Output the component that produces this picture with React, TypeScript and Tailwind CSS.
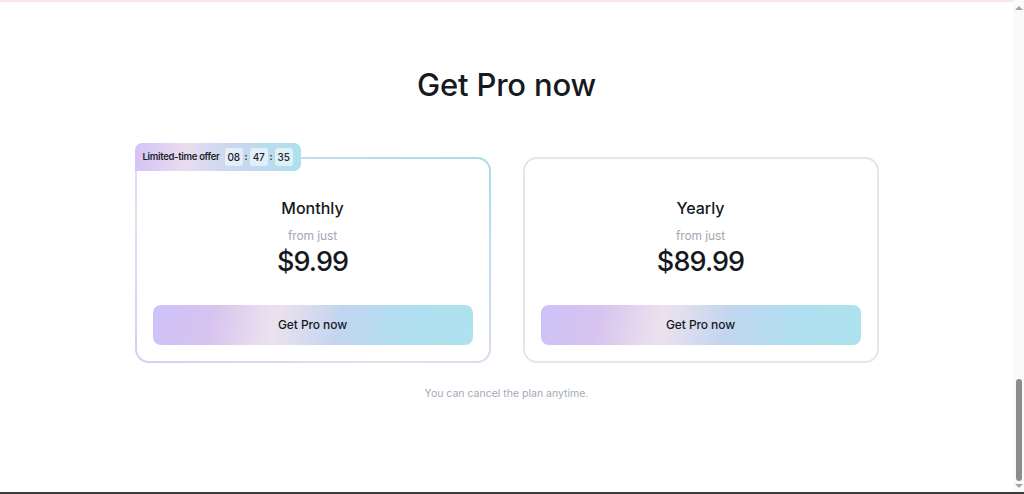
import React from "react";

const plans = [
  { name: "Monthly", price: "$9.99", offer: true },
  { name: "Yearly", price: "$89.99", offer: false },
];

const btnGradient =
  "bg-[linear-gradient(100deg,#cdc2f8_0%,#d7c3ef_18%,#ece2ee_38%,#c2d5ef_58%,#b0dfef_78%,#ade2ee_100%)]";

function Timer() {
  const parts = ["08", "47", "35"];
  return (
    <div className="flex items-center gap-[2px]">
      {parts.map((p, i) => (
        <React.Fragment key={p}>
          {i > 0 && <span className="text-[9.5px] font-semibold text-[#222]">:</span>}
          <span className="flex h-[18px] min-w-[18px] items-center justify-center rounded-[3px] bg-white/55 px-[2px] text-[10px] font-medium tracking-[-0.2px] text-[#1f2430]">
            {p}
          </span>
        </React.Fragment>
      ))}
    </div>
  );
}

function PlanCard(p: { name: string; price: string; offer: boolean }) {
  const border = p.offer
    ? "bg-[linear-gradient(30deg,#dccbf2_0%,#ecdcee_35%,#c9dcf0_65%,#a8dcec_100%)]"
    : "bg-[#e1e7ee]";
  return (
    <div className={`relative w-[356px] rounded-[14px] p-[2px] ${border}`}>
      {p.offer && (
        <div className="absolute left-0 top-[-14px] flex h-[28px] items-center gap-[5px] rounded-[7px] rounded-bl-none bg-[linear-gradient(90deg,#d3c4f6_0%,#e9dcee_30%,#c7d8f0_60%,#aee0ee_100%)] pl-[8px] pr-[8px]">
          <span className="text-[9.5px] font-semibold tracking-[-0.3px] text-[#1b1f2a]">
            Limited-time offer
          </span>
          <Timer />
        </div>
      )}
      <div className="flex flex-col items-center rounded-[12px] bg-white px-4 pb-4 pt-[35px]">
        <div className="text-[16px] font-medium leading-[28px] text-[#151821]">{p.name}</div>
        <div className="mt-[4px] text-[12px] leading-[20px] tracking-[-0.1px] text-[#a2a8b3]">from just</div>
        <div className="mt-[1px] text-[27px] font-medium leading-[30px] tracking-[-0.9px] text-[#151821]">
          {p.price}
        </div>
        <button
          className={`mt-[28px] flex h-[40px] w-full items-center justify-center rounded-[8px] text-[12px] font-medium tracking-[-0.1px] text-[#161922] ${btnGradient}`}
        >
          Get Pro now
        </button>
      </div>
    </div>
  );
}

function Scrollbar() {
  return (
    <div className="flex w-[11px] flex-col items-center bg-[#fafafa] pb-[4px] pt-[6px]">
      <div className="h-0 w-0 border-x-[4px] border-b-[4px] border-x-transparent border-b-[#a3a3a3]" />
      <div className="flex-1" />
      <div className="h-[102px] w-[6px] rounded-full bg-[#8c8c8c]" />
      <div className="mt-[3px] h-0 w-0 border-x-[4px] border-t-[4px] border-x-transparent border-t-[#a3a3a3]" />
    </div>
  );
}

export default function App() {
  return (
    <div className="flex h-[494px] flex-col bg-white font-['Inter',sans-serif]">
      <div className="flex flex-1">
        <main className="flex flex-1 flex-col items-center border-t-2 border-[#fce6e7] pt-[63px]">
          <h1 className="text-[31px] font-medium leading-[40px] tracking-[-0.2px] text-[#17191f]">
            Get Pro now
          </h1>
          <section className="mt-[52px] flex gap-[32px]">
            {plans.map((pl) => (
              <PlanCard key={pl.name} {...pl} />
            ))}
          </section>
          <p className="mt-[23px] text-[10.5px] leading-[16px] text-[#a3aab7]">
            You can cancel the plan anytime.
          </p>
        </main>
        <Scrollbar />
      </div>
      <div className="h-[2px] bg-[#3a3a3a]" />
    </div>
  );
}
